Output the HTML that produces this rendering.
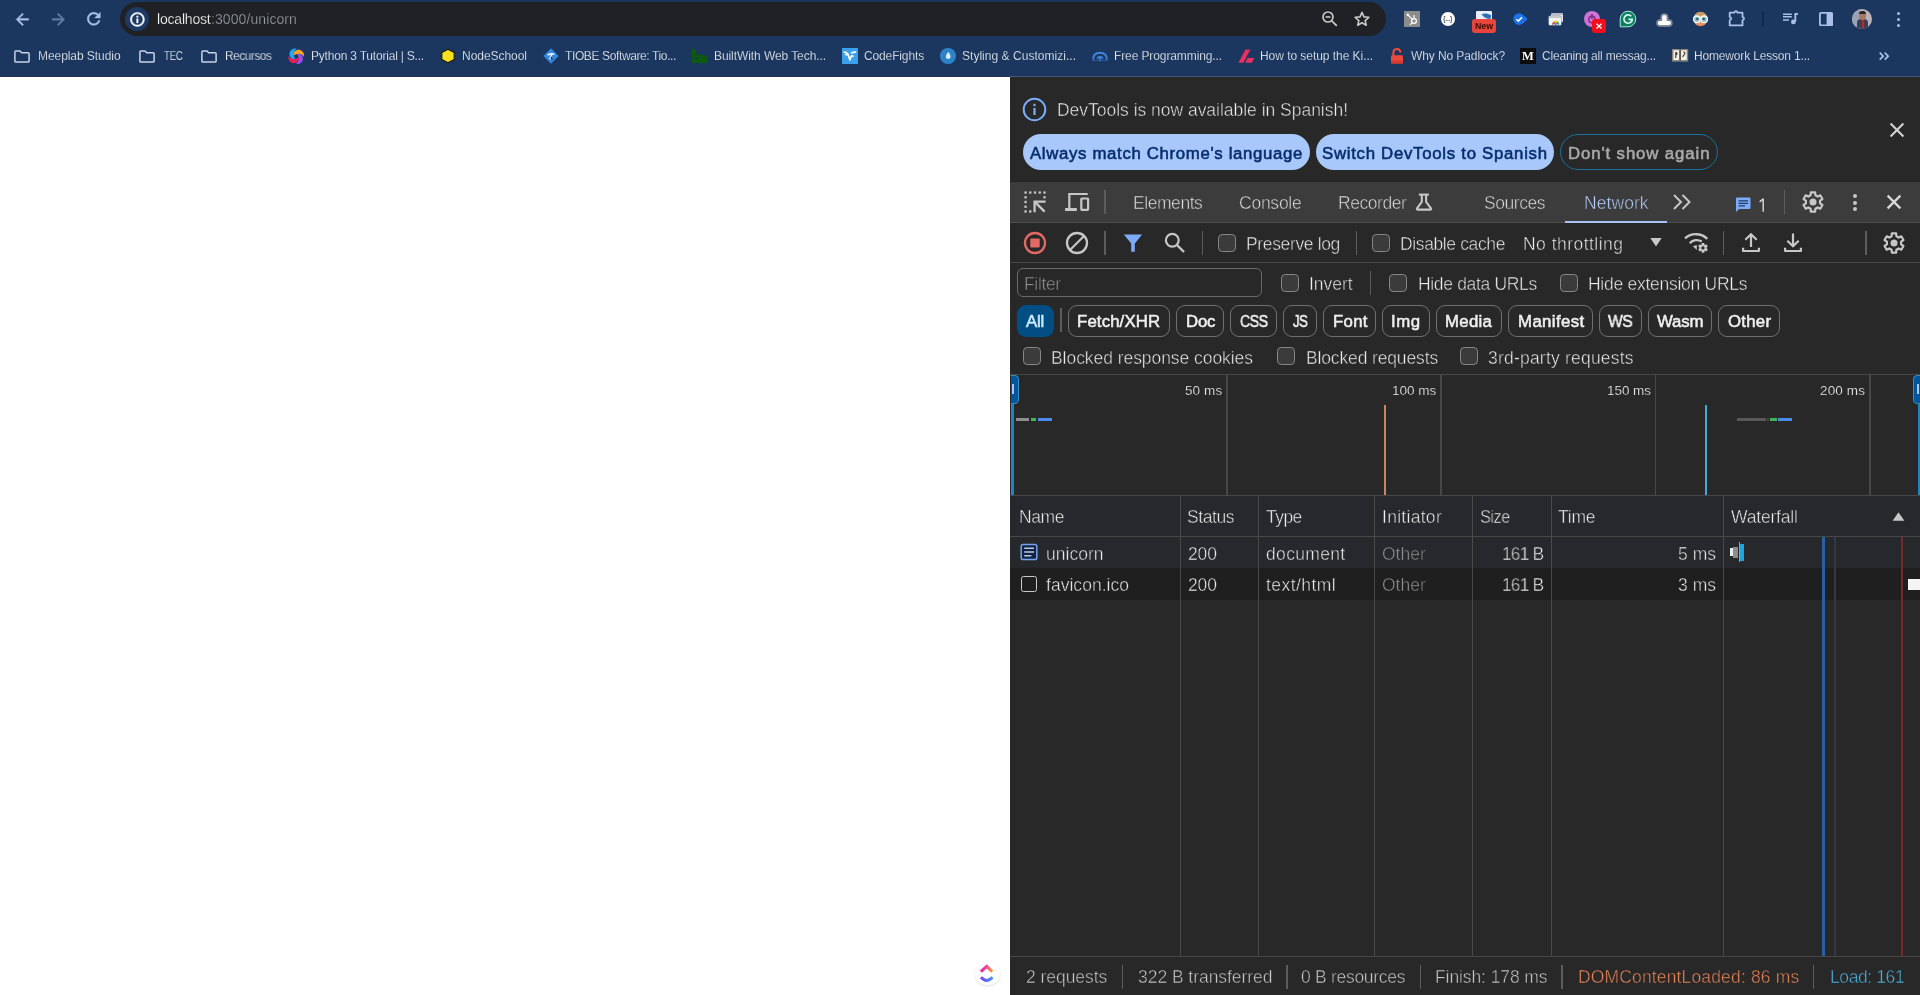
<!DOCTYPE html>
<html><head><meta charset="utf-8"><title>localhost:3000/unicorn</title>
<style>
html,body{margin:0;padding:0;}
body{width:1920px;height:995px;overflow:hidden;background:#fff;position:relative;font-family:"Liberation Sans",sans-serif;}
.r{position:absolute;display:block;box-sizing:border-box;}
.t{position:absolute;height:24px;line-height:24px;white-space:pre;font-family:"Liberation Sans",sans-serif;will-change:transform;}
</style></head><body>
<div class="r" style="left:0px;top:0px;width:1920px;height:77px;background:#1b375f;"></div>
<div class="r" style="left:0px;top:76px;width:1010px;height:1px;background:#21355a;"></div>
<div class="r" style="left:1010px;top:76px;width:910px;height:1px;background:#45587a;"></div>
<div class="r" style="left:120px;top:2px;width:1266px;height:34px;background:#202124;border-radius:17px;"></div>
<svg class="r" style="left:12.700000000000001px;top:9.799999999999999px;" width="18.8" height="18.8" viewBox="0 0 24 24"><path d="M20 11H7.830l5.590-5.590L12 4l-8 8 8 8 1.410-1.410L7.830 13H20v-2z" fill="#a9c1ea" stroke="#a9c1ea" stroke-width=".55" stroke-linejoin="round"/></svg>
<svg class="r" style="left:48.6px;top:9.799999999999999px;" width="18.8" height="18.8" viewBox="0 0 24 24"><path d="M12 4l-1.410 1.410L16.170 11H4v2h12.170l-5.580 5.590L12 20l8-8z" fill="#5f7ba6" stroke="#5f7ba6" stroke-width=".55" stroke-linejoin="round"/></svg>
<svg class="r" style="left:84.2px;top:9.2px;" width="19.6" height="19.6" viewBox="0 0 24 24"><path d="M17.650 6.350C16.200 4.900 14.210 4 12 4c-4.420 0-7.990 3.580-7.990 8s3.570 8 7.990 8c3.730 0 6.840-2.550 7.730-6h-2.080c-.820 2.330-3.040 4-5.650 4-3.310 0-6-2.690-6-6s2.690-6 6-6c1.660 0 3.140.690 4.220 1.780L13 11h7V4l-2.350 2.350z" fill="#a9c1ea" stroke="#a9c1ea" stroke-width=".5" stroke-linejoin="round"/></svg>
<div class="r" style="left:125px;top:7px;width:24px;height:24px;background:#1d3a65;border-radius:12px;"></div>
<svg class="r" style="left:128.6px;top:10.65px;" width="16.8" height="16.8" viewBox="0 0 24 24"><path d="M11 7h2v2h-2zm0 4h2v6h-2zm1-9C6.480 2 2 6.480 2 12s4.480 10 10 10 10-4.480 10-10S17.520 2 12 2zm0 18c-4.410 0-8-3.590-8-8s3.590-8 8-8 8 3.590 8 8-3.590 8-8 8z" fill="#ffffff" stroke="#ffffff" stroke-width=".7"/></svg>
<div class="t" style="left:157px;top:7.0px;font-size:14px;color:#ffffff;font-weight:400;letter-spacing:-0.195px;-webkit-text-stroke:0.25px #202124;">localhost</div>
<div class="t" style="left:211px;top:7.0px;font-size:14px;color:#9aa0a6;font-weight:400;letter-spacing:0.089px;-webkit-text-stroke:0.25px #202124;">:3000/unicorn</div>
<svg class="r" style="left:1320px;top:9px;" width="20" height="20" viewBox="0 0 20 20"><circle cx="8" cy="8" r="5" fill="none" stroke="#c4c7c5" stroke-width="1.7"/><path d="M11.8 11.8l5 5" stroke="#c4c7c5" stroke-width="1.9"/><rect x="5.6" y="7.2" width="4.8" height="1.6" fill="#c4c7c5"/></svg>
<svg class="r" style="left:1353px;top:10px;" width="18" height="18" viewBox="0 0 20 20"><path d="M10 2.6l2.2 5 5.4.5-4.1 3.6 1.2 5.3L10 14.2l-4.7 2.8 1.2-5.3-4.1-3.6 5.4-.5z" fill="none" stroke="#c4c7c5" stroke-width="1.8" stroke-linejoin="round"/></svg>
<div class="r" style="left:1404px;top:11px;width:16px;height:16px;background:#8c8c8c;"></div>
<svg class="r" style="left:1404px;top:11px;" width="16" height="16" viewBox="0 0 16 16"><circle cx="10" cy="10" r="2.4" fill="none" stroke="#fff" stroke-width="1.3"/><path d="M8.3 8.3L4 4M10 7.5V4M8 11.8l-2 2" stroke="#fff" stroke-width="1.2"/><circle cx="3.8" cy="3.8" r="1.2" fill="#fff"/></svg>
<div class="r" style="left:1440.8px;top:11.8px;width:14.6px;height:14.6px;background:#ffffff;border-radius:7.300px;"></div>
<div class="t" style="left:1443.4px;top:6.7px;font-size:6.5px;color:#555;font-weight:700;letter-spacing:-0.215px;">{...}</div>
<div class="r" style="left:1476px;top:11px;width:16px;height:9px;background:#e8eef8;border-radius:1px;"></div>
<svg class="r" style="left:1476px;top:11px;" width="16" height="9" viewBox="0 0 16 9"><path d="M5.500 3.200c3-1.300 6.500-.900 9.500 1 .300 1.400-.100 2.700-1 3.800-2.800 0-6-1.500-8.500-4.800z" fill="#2f6fb5"/></svg>
<div class="r" style="left:1472px;top:19px;width:24px;height:14px;background:#e8453c;border-radius:3px;"></div>
<div class="t" style="left:1475.2px;top:14.3px;font-size:8.8px;color:#3a0b08;font-weight:700;letter-spacing:-0.031px;">New</div>
<svg class="r" style="left:1512.6px;top:13.4px;" width="15" height="12.2" viewBox="0 0 15 12.2"><path d="M6.100.300a5.800 5.800 0 1 0 0 11.600c2.600 0 5.600-2.900 8.600-5.800C11.700 3.200 8.700.300 6.100.300z" fill="#1a73e8"/><path d="M3.400 6.200l1.900 1.900 3.700-3.900" fill="none" stroke="#fff" stroke-width="1.600"/></svg>
<div class="r" style="left:1551.2px;top:13.2px;width:11.5px;height:8.5px;background:#dfe2e6;border-radius:1px;border-top:2px solid #b9bec6;"></div>
<div class="r" style="left:1549px;top:16px;width:12px;height:9.3px;background:#f3f4f6;border-radius:1px;border-top:2px solid #c3c7ce;box-shadow:0 0 0 .6px #9aa0aa;"></div>
<svg class="r" style="left:1551.5px;top:19.3px;" width="7.4" height="6" viewBox="0 0 7.4 6"><path d="M.300 6a3.400 3.400 0 0 1 1.300-3.500L3.700 4.600z" fill="#e94235"/><path d="M1.600 2.500A3.400 3.400 0 0 1 5.800 2.500L3.700 4.600z" fill="#fbbc04"/><path d="M5.800 2.500A3.400 3.400 0 0 1 7.100 6L3.700 4.600z" fill="#34a853"/><circle cx="3.700" cy="4.900" r="1.200" fill="#4285f4"/></svg>
<div class="r" style="left:1584px;top:11px;width:16px;height:16px;background:#cf73d4;border-radius:8px;"></div>
<svg class="r" style="left:1586px;top:13px;" width="12" height="12" viewBox="0 0 12 12"><circle cx="6" cy="6.500" r="3.200" fill="none" stroke="#7a2b86" stroke-width="1.400"/><path d="M6 1v5" stroke="#7a2b86" stroke-width="1.400"/></svg>
<div class="r" style="left:1592px;top:19px;width:14px;height:14px;background:#f20d1a;border-radius:3px;"></div>
<svg class="r" style="left:1592px;top:19px;" width="14" height="14" viewBox="0 0 14 14"><path d="M4.500 4.800l5 4.600M9.500 4.800l-5 4.600" stroke="#fff" stroke-width="1.300"/></svg>
<svg class="r" style="left:1619px;top:10px;" width="18" height="18" viewBox="0 0 18 18"><path d="M9 1.200a7.800 7.800 0 1 1 0 15.600H1.200V9A7.800 7.800 0 0 1 9 1.200z" fill="#0d7f60" stroke="#a8e6d6" stroke-width="1"/><path d="M12.300 6.300a4.200 4.200 0 1 0 1 3.100H9.400" fill="none" stroke="#d4f4ec" stroke-width="1.700"/></svg>
<svg class="r" style="left:1655.6px;top:12.6px;overflow:visible;" width="17" height="14" viewBox="0 0 17 14"><rect x="4.40" y="0.30" width="8.00" height="13.50" rx="4.00" fill="#7f8797"/><circle cx="3.900" cy="10.050" r="3.75" fill="#7f8797"/><circle cx="12.900" cy="10.050" r="3.75" fill="#7f8797"/><rect x="3.900" y="6.30" width="9" height="7.50" fill="#7f8797"/><rect x="6.15" y="2.05" width="4.50" height="10.00" rx="2.25" fill="#fdfcfa"/><circle cx="3.900" cy="10.050" r="2.00" fill="#fdfcfa"/><circle cx="12.900" cy="10.050" r="2.00" fill="#fdfcfa"/><rect x="3.900" y="8.05" width="9" height="4.00" fill="#fdfcfa"/></svg>
<svg class="r" style="left:1691.5px;top:11.2px;" width="17" height="16" viewBox="0 0 17 16"><ellipse cx="8.500" cy="8" rx="6.800" ry="7.300" fill="#e58a5b"/><path d="M1.900 6.500A6.800 7.300 0 0 1 15.100 6.500L8.500 9z" fill="#c99a6b"/><circle cx="4.900" cy="8.300" r="3.300" fill="#8dbfc7" stroke="#f2f8f9" stroke-width="1.400"/><circle cx="12.100" cy="8.300" r="3.300" fill="#8dbfc7" stroke="#f2f8f9" stroke-width="1.400"/><circle cx="5.300" cy="7.900" r="1.200" fill="#35555e"/><circle cx="11.700" cy="7.900" r="1.200" fill="#35555e"/><path d="M7.300 12.200h2.400L8.500 14z" fill="#f3a070"/></svg>
<svg class="r" style="left:1727px;top:10px;" width="19" height="18" viewBox="0 0 19 18"><path d="M2.700 2.700H7.400a1.500 1.500 0 0 1 3 0H15.500V7.100a1.500 1.500 0 0 1 0 3V15.400H2.700V10.100a1.500 1.500 0 0 0 0-3z" fill="none" stroke="#a9c1ea" stroke-width="1.800" stroke-linejoin="round"/></svg>
<div class="r" style="left:1762px;top:11px;width:2px;height:16px;background:#10294f;border-radius:1px;"></div>
<svg class="r" style="left:1781px;top:10px;" width="18" height="18" viewBox="0 0 18 18"><path d="M2 4.200h8.800M2 6.800h8.800M2 10h6" stroke="#a9c1ea" stroke-width="1.500"/><path d="M14.300 3.100v8.600" stroke="#a9c1ea" stroke-width="1.800"/><path d="M14.300 4h2.700" stroke="#a9c1ea" stroke-width="1.800"/><circle cx="12.400" cy="11.900" r="2.400" fill="#a9c1ea"/></svg>
<svg class="r" style="left:1818.9px;top:12px;" width="14.2" height="14.4" viewBox="0 0 14.2 14.4"><rect x=".900" y=".900" width="12.400" height="12.600" rx="1.200" fill="none" stroke="#a9c1ea" stroke-width="1.800"/><rect x="7.600" y=".900" width="5.700" height="12.600" fill="#a9c1ea"/></svg>
<div class="r" style="left:1852px;top:9px;width:20px;height:20px;border-radius:10px;overflow:hidden;background:#b9b4b8;"><div class="r" style="left:0;top:0;width:8px;height:20px;background:#9aa3b5;"></div><div class="r" style="left:5px;top:10px;width:11px;height:12px;background:#3c3f52;border-radius:4px 4px 0 0;"></div><div class="r" style="left:7px;top:3px;width:7px;height:8px;background:#a87862;border-radius:3.500px;"></div><div class="r" style="left:7px;top:2px;width:7px;height:3px;background:#2b2422;border-radius:3px 3px 0 0;"></div><div class="r" style="left:9.500px;top:11px;width:2px;height:8px;background:#c0272d;"></div></div>
<div class="r" style="left:1896.5px;top:11.5px;width:3px;height:3px;background:#a9c1ea;border-radius:1.5px;"></div>
<div class="r" style="left:1896.5px;top:17.5px;width:3px;height:3px;background:#a9c1ea;border-radius:1.5px;"></div>
<div class="r" style="left:1896.5px;top:23.5px;width:3px;height:3px;background:#a9c1ea;border-radius:1.5px;"></div>
<svg class="r" style="left:14px;top:50px;" width="16" height="13" viewBox="0 0 16 13"><path d="M1.800 1h4.200l1.600 1.700h6.600a.900.900 0 0 1 .900.900v7.600a.900.900 0 0 1-.900.900H1.800a.900.900 0 0 1-.900-.900V1.900a.900.900 0 0 1 .900-.900z" fill="none" stroke="#c7d3e8" stroke-width="1.500"/></svg>
<div class="t" style="left:38px;top:44.0px;font-size:12px;color:#ffffff;font-weight:400;letter-spacing:-0.064px;-webkit-text-stroke:0.25px #1b375f;">Meeplab Studio</div>
<svg class="r" style="left:139px;top:50px;" width="16" height="13" viewBox="0 0 16 13"><path d="M1.800 1h4.200l1.600 1.700h6.600a.900.900 0 0 1 .900.900v7.600a.900.900 0 0 1-.900.900H1.800a.900.900 0 0 1-.900-.900V1.900a.900.900 0 0 1 .900-.900z" fill="none" stroke="#c7d3e8" stroke-width="1.500"/></svg>
<div class="t" style="left:164px;top:44.0px;font-size:12px;color:#ffffff;font-weight:400;letter-spacing:-0.420px;-webkit-text-stroke:0.25px #1b375f;transform:scaleX(0.8135);transform-origin:0 50%;">TEC</div>
<svg class="r" style="left:201px;top:50px;" width="16" height="13" viewBox="0 0 16 13"><path d="M1.800 1h4.200l1.600 1.700h6.600a.900.900 0 0 1 .900.900v7.600a.900.900 0 0 1-.900.900H1.800a.900.900 0 0 1-.900-.900V1.900a.900.900 0 0 1 .900-.900z" fill="none" stroke="#c7d3e8" stroke-width="1.500"/></svg>
<div class="t" style="left:225px;top:44.0px;font-size:12px;color:#ffffff;font-weight:400;letter-spacing:-0.420px;-webkit-text-stroke:0.25px #1b375f;transform:scaleX(0.9826);transform-origin:0 50%;">Recursos</div>
<svg class="r" style="left:287.8px;top:47.6px;" width="16.4" height="16.8" viewBox="-0.3 -0.3 16.6 16.6"><path d="M5.400 7C4.600 3.600 7.600.300 12 1.400c3 .900 4.500 3.900 3.800 7C14.300 5.600 10.500 4.600 5.400 7z" fill="#f5a524" transform="rotate(0 8 8)"/><path d="M5.400 7C4.600 3.600 7.600.300 12 1.400c3 .900 4.500 3.900 3.800 7C14.300 5.600 10.500 4.600 5.400 7z" fill="#8f52ea" transform="rotate(90 8 8)"/><path d="M5.400 7C4.600 3.600 7.600.300 12 1.400c3 .900 4.500 3.900 3.800 7C14.300 5.600 10.500 4.600 5.400 7z" fill="#ec1c5b" transform="rotate(180 8 8)"/><path d="M5.400 7C4.600 3.600 7.600.300 12 1.400c3 .900 4.500 3.900 3.800 7C14.300 5.600 10.500 4.600 5.400 7z" fill="#1ea7f2" transform="rotate(270 8 8)"/></svg>
<div class="t" style="left:310.5px;top:44.0px;font-size:12px;color:#ffffff;font-weight:400;letter-spacing:-0.202px;-webkit-text-stroke:0.25px #1b375f;">Python 3 Tutorial | S...</div>
<svg class="r" style="left:440px;top:48px;" width="16" height="16" viewBox="0 0 16 16"><path d="M8 1.200l6.200 3.400v6.800L8 14.800 1.800 11.400v-6.800z" fill="#f7df1e" stroke="#15150c" stroke-width="1.100" stroke-linejoin="round"/></svg>
<div class="t" style="left:462px;top:44.0px;font-size:12px;color:#ffffff;font-weight:400;letter-spacing:-0.038px;-webkit-text-stroke:0.25px #1b375f;">NodeSchool</div>
<svg class="r" style="left:543px;top:48px;" width="16" height="16" viewBox="0 0 16 16"><path d="M8 .300l7.600 7.700L8 15.700.400 8z" fill="#3287de"/><path d="M4.700 7.200c1.600-1.700 3.600-1.700 6.600-.900" fill="none" stroke="#fff" stroke-width="1.500"/><path d="M8.600 6.500L6.600 11.200" stroke="#fff" stroke-width="1.500"/><path d="M7.700 8.800l1.700 2.700" stroke="#14233f" stroke-width="1.200"/></svg>
<div class="t" style="left:565px;top:44.0px;font-size:12px;color:#ffffff;font-weight:400;letter-spacing:-0.381px;-webkit-text-stroke:0.25px #1b375f;">TIOBE Software: Tio...</div>
<svg class="r" style="left:691.6px;top:48.5px;" width="16" height="14" viewBox="0 0 16 14"><path d="M0 0h3.800v5.200h4.700v3.300l2.400-3.300 2 3 2.400-3.300.700 9.100H0z" fill="#0b5a0e"/><rect x="3.600" y="8" width="2.200" height="2.600" fill="#1b375f"/></svg>
<div class="t" style="left:714px;top:44.0px;font-size:12px;color:#ffffff;font-weight:400;letter-spacing:-0.076px;-webkit-text-stroke:0.25px #1b375f;">BuiltWith Web Tech...</div>
<div class="r" style="left:842.2px;top:48px;width:15.8px;height:16px;background:#3ba1ea;"></div>
<svg class="r" style="left:842.2px;top:48px;" width="15.8" height="16" viewBox="0 0 15.8 16"><path d="M1.600 4.200c2.200-.200 3.600.500 4.500 2.300l1.800 5.400 1.300-3.700h2.500M9 5.400c1.300-1 3-1.300 5.200-1.200" fill="none" stroke="#fff" stroke-width="1.700" stroke-linejoin="round"/><path d="M2.800 6.400c1.200 0 2 .400 2.500 1.200" fill="none" stroke="#fff" stroke-width="1.100"/></svg>
<div class="t" style="left:864px;top:44.0px;font-size:12px;color:#ffffff;font-weight:400;letter-spacing:-0.137px;-webkit-text-stroke:0.25px #1b375f;">CodeFights</div>
<div class="r" style="left:940.3px;top:48.3px;width:15.4px;height:15.4px;background:#2b82c6;border-radius:7.700px;"></div>
<svg class="r" style="left:940px;top:48px;" width="16" height="16" viewBox="0 0 16 16"><path d="M8.300 3.800c1.500 2.200 2.300 3.600 2.300 4.900a2.400 2.400 0 1 1-4.800 0c0-1.300 1-2.700 2.500-4.900z" fill="#dcecf9"/></svg>
<div class="t" style="left:962px;top:44.0px;font-size:12px;color:#ffffff;font-weight:400;letter-spacing:0.029px;-webkit-text-stroke:0.25px #1b375f;">Styling &amp; Customizi...</div>
<svg class="r" style="left:1091px;top:48px;" width="18" height="16" viewBox="0 0 18 16"><path d="M2.100 11.800C2.100 6.800 5.200 4.800 9 4.800s6.900 2 6.900 7" fill="none" stroke="#3f86da" stroke-width="1.900"/><path d="M6.200 10.800a2.900 2.600 0 0 1 5.600 0" fill="none" stroke="#3f86da" stroke-width="1.600"/><path d="M9 8.500v4.800" stroke="#3f86da" stroke-width="1.700"/><path d="M1.200 12.300h15.600" stroke="#2a5fa8" stroke-width="1"/></svg>
<div class="t" style="left:1114px;top:44.0px;font-size:12px;color:#ffffff;font-weight:400;letter-spacing:-0.107px;-webkit-text-stroke:0.25px #1b375f;">Free Programming...</div>
<svg class="r" style="left:1237px;top:48px;" width="18" height="16" viewBox="0 0 18 16"><path d="M8.400 1.500h4.900L6.400 14.800H1.500z" fill="#eb2f62"/><path d="M10.600 10h6.600l-2.300 4.800H8.200z" fill="#eb2f62"/></svg>
<div class="t" style="left:1260px;top:44.0px;font-size:12px;color:#ffffff;font-weight:400;letter-spacing:-0.048px;-webkit-text-stroke:0.25px #1b375f;">How to setup the Ki...</div>
<svg class="r" style="left:1389px;top:47px;" width="16" height="18" viewBox="0 0 16 18"><rect x="2" y="8.200" width="12" height="8.400" rx="1.200" fill="#e94a3c"/><path d="M4.400 8.200V5.600a3.500 3.500 0 0 1 6.900-.900" fill="none" stroke="#e94a3c" stroke-width="2.100" stroke-linecap="round"/><path d="M2 13.500h12v1.900a1.200 1.200 0 0 1-1.200 1.200H3.200A1.200 1.200 0 0 1 2 15.400z" fill="#d8392c"/></svg>
<div class="t" style="left:1411px;top:44.0px;font-size:12px;color:#ffffff;font-weight:400;letter-spacing:-0.092px;-webkit-text-stroke:0.25px #1b375f;">Why No Padlock?</div>
<div class="r" style="left:1520.2px;top:48.4px;width:15.8px;height:15.6px;background:#0c0c0c;"></div>
<div class="t" style="left:1522.300px;top:44.300px;font-size:12.500px;color:#fff;font-weight:700;font-family:'Liberation Serif',serif;letter-spacing:-.3px;">M</div>
<div class="t" style="left:1542px;top:44.0px;font-size:12px;color:#ffffff;font-weight:400;letter-spacing:-0.185px;-webkit-text-stroke:0.25px #1b375f;">Cleaning all messag...</div>
<svg class="r" style="left:1672.4px;top:49px;" width="16.2" height="12.6" viewBox="0 0 16.2 12.6"><rect x="0" y="0" width="16.200" height="12.600" fill="#8d8780"/><path d="M1.500 1.200h5.600v9.800H1.500zM9.100 1.200h5.600v9.800H9.100z" fill="#f5f2ea"/><path d="M3.800 3v6M5.300 3.500c-1 .8-1 1.800 0 2.400M11.300 3c1.500 0 2 1 1.300 2.300-.600 1-1.600 1.300-1.900 2.900" fill="none" stroke="#3a322b" stroke-width="1.100"/><rect x="7.500" y=".600" width="1.200" height="11" fill="#4c453e"/></svg>
<div class="t" style="left:1694px;top:44.0px;font-size:12px;color:#ffffff;font-weight:400;letter-spacing:-0.169px;-webkit-text-stroke:0.25px #1b375f;">Homework Lesson 1...</div>
<svg class="r" style="left:1878px;top:51px;" width="12" height="10" viewBox="0 0 12 10"><path d="M1.700 1.700l3.500 3.500-3.500 3.500M6.700 1.700l3.500 3.500-3.500 3.500" fill="none" stroke="#a9c1ea" stroke-width="1.700"/></svg>
<div class="r" style="left:1010px;top:77px;width:910px;height:918px;background:#282828;"></div>
<svg class="r" style="left:1022px;top:97px;" width="25" height="25" viewBox="0 0 25 25"><circle cx="12.5" cy="12.5" r="10.8" fill="none" stroke="#7cacf8" stroke-width="2"/><rect x="11.4" y="11" width="2.2" height="7" fill="#7cacf8"/><rect x="11.4" y="6.8" width="2.2" height="2.4" fill="#7cacf8"/></svg>
<div class="t" style="left:1057px;top:98.2px;font-size:17.5px;color:#eeeeee;font-weight:400;letter-spacing:-0.023px;-webkit-text-stroke:0.46px #282828;">DevTools is now available in Spanish!</div>
<div class="r" style="left:1023px;top:134px;width:287px;height:36px;background:#a8c7fa;border-radius:18px;"></div>
<div class="t" style="left:1029.7px;top:142.3px;font-size:16.8px;color:#062e6f;font-weight:400;letter-spacing:0.661px;-webkit-text-stroke:.55px currentColor;">Always match Chrome&#x27;s language</div>
<div class="r" style="left:1316px;top:134px;width:238px;height:36px;background:#a8c7fa;border-radius:18px;"></div>
<div class="t" style="left:1322px;top:142.3px;font-size:16.8px;color:#062e6f;font-weight:400;letter-spacing:0.719px;-webkit-text-stroke:.55px currentColor;">Switch DevTools to Spanish</div>
<div class="r" style="left:1560px;top:134px;width:158px;height:36px;background:transparent;border-radius:18px;border:1.4px solid #17729f;"></div>
<div class="t" style="left:1568px;top:142.3px;font-size:16.8px;color:#a9a9a9;font-weight:400;letter-spacing:0.884px;-webkit-text-stroke:.55px currentColor;">Don&#x27;t show again</div>
<svg class="r" style="left:1888px;top:121.1px;" width="18" height="18" viewBox="0 0 18 18"><path d="M2.600 2.600l12.800 12.800M15.400 2.600L2.600 15.400" stroke="#d2d2d2" stroke-width="2.100"/></svg>
<div class="r" style="left:1010px;top:181px;width:910px;height:1px;background:#232323;"></div>
<div class="r" style="left:1010px;top:182px;width:910px;height:40px;background:#3c3c3c;"></div>
<div class="r" style="left:1010px;top:222px;width:910px;height:1px;background:#4e4c4c;"></div>
<svg class="r" style="left:1023px;top:190px;" width="24" height="24" viewBox="0 0 24 24"><rect x="1.40" y="1.40" width="2.3" height="2.3" fill="#c7c7c7"/><rect x="6.13" y="1.40" width="2.3" height="2.3" fill="#c7c7c7"/><rect x="10.86" y="1.40" width="2.3" height="2.3" fill="#c7c7c7"/><rect x="15.59" y="1.40" width="2.3" height="2.3" fill="#c7c7c7"/><rect x="20.32" y="1.40" width="2.3" height="2.3" fill="#c7c7c7"/><rect x="1.40" y="6.13" width="2.3" height="2.3" fill="#c7c7c7"/><rect x="1.40" y="10.86" width="2.3" height="2.3" fill="#c7c7c7"/><rect x="1.40" y="15.59" width="2.3" height="2.3" fill="#c7c7c7"/><rect x="1.40" y="20.32" width="2.3" height="2.3" fill="#c7c7c7"/><rect x="20.32" y="6.13" width="2.3" height="2.3" fill="#c7c7c7"/><rect x="6.13" y="20.32" width="2.3" height="2.3" fill="#c7c7c7"/><path d="M11.600 22.200V11.600H22.600" fill="none" stroke="#c7c7c7" stroke-width="2.300"/><path d="M11.800 11.800L21.600 21.600" stroke="#c7c7c7" stroke-width="2.400"/></svg>
<svg class="r" style="left:1064px;top:191px;" width="26" height="22" viewBox="0 0 26 22"><path d="M5.300 17V3h18.400" fill="none" stroke="#c7c7c7" stroke-width="2.200"/><rect x="1.100" y="17" width="11.700" height="3" fill="#c7c7c7"/><rect x="17.300" y="7.500" width="6.800" height="11.400" rx=".600" fill="none" stroke="#c7c7c7" stroke-width="2.200"/></svg>
<div class="r" style="left:1104.35px;top:190px;width:1.3px;height:24px;background:#5c5c5c;"></div>
<div class="t" style="left:1133.3px;top:190.6px;font-size:17.5px;color:#dcdcdc;font-weight:400;letter-spacing:-0.444px;-webkit-text-stroke:0.46px #3c3c3c;">Elements</div>
<div class="t" style="left:1238.8px;top:190.6px;font-size:17.5px;color:#dcdcdc;font-weight:400;letter-spacing:-0.244px;-webkit-text-stroke:0.46px #3c3c3c;">Console</div>
<div class="t" style="left:1338.3px;top:190.6px;font-size:17.5px;color:#dcdcdc;font-weight:400;letter-spacing:-0.447px;-webkit-text-stroke:0.46px #3c3c3c;">Recorder</div>
<svg class="r" style="left:1415px;top:192px;" width="19" height="20" viewBox="0 0 19 20"><path d="M3.900 2.600H13.900" stroke="#c7c7c7" stroke-width="2.100"/><path d="M6.800 2.600V9.800L2 16.400a.800.800 0 0 0 .700 1.200h12.600a.800.800 0 0 0 .700-1.200L11.100 9.800V2.600" fill="none" stroke="#c7c7c7" stroke-width="2.100" stroke-linejoin="round"/></svg>
<div class="t" style="left:1484.2px;top:190.6px;font-size:17.5px;color:#dcdcdc;font-weight:400;letter-spacing:-0.443px;-webkit-text-stroke:0.46px #3c3c3c;">Sources</div>
<div class="t" style="left:1583.5px;top:190.6px;font-size:17.5px;color:#b6cffa;font-weight:400;letter-spacing:0.074px;-webkit-text-stroke:0.46px #3c3c3c;">Network</div>
<div class="r" style="left:1565px;top:220.7px;width:102px;height:2.3px;background:#a6c3f4;"></div>
<svg class="r" style="left:1672px;top:193px;" width="20" height="18" viewBox="0 0 20 18"><path d="M2 2l7 7-7 7M10.500 2l7 7-7 7" fill="none" stroke="#c7c7c7" stroke-width="2"/></svg>
<svg class="r" style="left:1735.4px;top:197.3px;" width="17" height="16" viewBox="0 0 17 16"><path d="M1 1.500a1 1 0 0 1 1-1h12.500a1 1 0 0 1 1 1v9.500a1 1 0 0 1-1 1H4l-3 3z" fill="#7cacf8"/><path d="M3.500 3.800h9.500M3.500 6.300h9.500M3.500 8.800h6.500" stroke="#1f3a64" stroke-width="1.300"/></svg>
<svg class="r" style="left:1759.4px;top:198.4px;" width="6" height="14.2" viewBox="0 0 6 14.2"><path d="M.300 3.200L3.500.500H4.900V13.800H3.500V2.400L1 4.400z" fill="#dcdcdc"/></svg>
<div class="r" style="left:1784.05px;top:190px;width:1.3px;height:24px;background:#5c5c5c;"></div>
<svg class="r" style="left:1801px;top:190px;" width="24" height="24" viewBox="0 0 24 24"><path d="M9.60 5.21L9.84 2.34L14.16 2.34L14.40 5.21L16.68 6.53L19.29 5.30L21.45 9.04L19.08 10.69L19.08 13.31L21.45 14.96L19.29 18.70L16.68 17.47L14.40 18.79L14.16 21.66L9.84 21.66L9.60 18.79L7.32 17.47L4.71 18.70L2.55 14.96L4.92 13.31L4.92 10.69L2.55 9.04L4.71 5.30L7.32 6.53Z" fill="none" stroke="#c7c7c7" stroke-width="2.2" stroke-linejoin="round"/><circle cx="12" cy="12" r="3.5" fill="#c7c7c7"/></svg>
<div class="r" style="left:1853px;top:194.3px;width:4px;height:4px;background:#c7c7c7;border-radius:2px;"></div>
<div class="r" style="left:1853px;top:200.6px;width:4px;height:4px;background:#c7c7c7;border-radius:2px;"></div>
<div class="r" style="left:1853px;top:207px;width:4px;height:4px;background:#c7c7c7;border-radius:2px;"></div>
<svg class="r" style="left:1885px;top:193px;" width="18" height="18" viewBox="0 0 18 18"><path d="M2.600 2.600l12.800 12.800M15.400 2.600L2.600 15.400" stroke="#d8d8d8" stroke-width="2.300"/></svg>
<div class="r" style="left:1010px;top:262px;width:910px;height:1px;background:#474747;"></div>
<svg class="r" style="left:1023px;top:231px;" width="24" height="24" viewBox="0 0 24 24"><circle cx="12" cy="12" r="10" fill="none" stroke="#e46962" stroke-width="2.300"/><rect x="7.300" y="7.500" width="9.400" height="9" rx="1" fill="#e46962"/></svg>
<svg class="r" style="left:1065px;top:231px;" width="24" height="24" viewBox="0 0 24 24"><circle cx="12" cy="12" r="10" fill="none" stroke="#c7c7c7" stroke-width="2.300"/><path d="M5 19L19 5" stroke="#c7c7c7" stroke-width="2.200"/></svg>
<div class="r" style="left:1104.35px;top:231px;width:1.3px;height:24px;background:#5c5c5c;"></div>
<svg class="r" style="left:1122px;top:233px;" width="22" height="20" viewBox="0 0 22 20"><path d="M1.800 1.500h18.400L12.800 10.500V18.800H9.200V10.500z" fill="#7cacf8"/></svg>
<svg class="r" style="left:1163px;top:231px;" width="24" height="24" viewBox="0 0 24 24"><circle cx="9.300" cy="9.300" r="6.400" fill="none" stroke="#c7c7c7" stroke-width="2.200"/><path d="M14 14l7 7" stroke="#c7c7c7" stroke-width="2.400"/></svg>
<div class="r" style="left:1201.85px;top:231px;width:1.3px;height:24px;background:#5c5c5c;"></div>
<div class="r" style="left:1218px;top:233.95px;width:18.1px;height:18.1px;background:#3b3b3b;border:1.6px solid #878787;border-radius:4.2px;"></div>
<div class="t" style="left:1246.3px;top:231.6px;font-size:17.5px;color:#eeeeee;font-weight:400;letter-spacing:-0.354px;-webkit-text-stroke:0.46px #282828;">Preserve log</div>
<div class="r" style="left:1355.85px;top:231px;width:1.3px;height:24px;background:#5c5c5c;"></div>
<div class="r" style="left:1372px;top:233.95px;width:18.1px;height:18.1px;background:#3b3b3b;border:1.6px solid #878787;border-radius:4.2px;"></div>
<div class="t" style="left:1400.3px;top:231.6px;font-size:17.5px;color:#eeeeee;font-weight:400;letter-spacing:-0.379px;-webkit-text-stroke:0.46px #282828;">Disable cache</div>
<div class="t" style="left:1523.3px;top:231.6px;font-size:17.5px;color:#eeeeee;font-weight:400;letter-spacing:0.465px;-webkit-text-stroke:0.46px #282828;">No throttling</div>
<svg class="r" style="left:1650px;top:238px;" width="12" height="9" viewBox="0 0 12 9"><path d="M0.300 0h11.400L6 8.500z" fill="#c7c7c7"/></svg>
<svg class="r" style="left:1684px;top:232px;" width="26" height="22" viewBox="0 0 26 22"><path d="M1 6.400A16.400 16.400 0 0 1 23.300 6.800" fill="none" stroke="#c7c7c7" stroke-width="2.300"/><path d="M5.700 11.200A9.500 9.500 0 0 1 17.800 9.500" fill="none" stroke="#c7c7c7" stroke-width="2.200"/><path d="M8.900 14.200L12.800 13.100V18z" fill="#c7c7c7"/><path d="M17.53 12.61L17.71 11.07L20.29 11.07L20.47 12.61L21.11 12.99L22.54 12.37L23.83 14.60L22.58 15.53L22.58 16.27L23.83 17.20L22.54 19.43L21.11 18.81L20.47 19.19L20.29 20.73L17.71 20.73L17.53 19.19L16.89 18.81L15.46 19.43L14.17 17.20L15.42 16.27L15.42 15.53L14.17 14.60L15.46 12.37L16.89 12.99ZM20.600 15.900a1.600 1.600 0 1 0-3.200 0a1.600 1.600 0 1 0 3.200 0z" fill="#c7c7c7" fill-rule="evenodd"/></svg>
<div class="r" style="left:1722.6499999999999px;top:231px;width:1.3px;height:24px;background:#5c5c5c;"></div>
<svg class="r" style="left:1740px;top:232px;" width="22" height="22" viewBox="0 0 22 22"><path d="M11 15V2.500M5.300 7.800L11 2.200l5.700 5.600" fill="none" stroke="#c7c7c7" stroke-width="2.200"/><path d="M3.100 15.800v3.200h15.800v-3.200" fill="none" stroke="#c7c7c7" stroke-width="2.200" stroke-linejoin="round"/></svg>
<svg class="r" style="left:1782px;top:232px;" width="22" height="22" viewBox="0 0 22 22"><path d="M11 1.500v12.500M5.300 8.700L11 14.300l5.700-5.600" fill="none" stroke="#c7c7c7" stroke-width="2.200"/><path d="M3.100 15.800v3.200h15.800v-3.200" fill="none" stroke="#c7c7c7" stroke-width="2.200" stroke-linejoin="round"/></svg>
<div class="r" style="left:1865.35px;top:231px;width:1.3px;height:24px;background:#5c5c5c;"></div>
<svg class="r" style="left:1882px;top:231px;" width="24" height="24" viewBox="0 0 24 24"><path d="M9.60 5.21L9.84 2.34L14.16 2.34L14.40 5.21L16.68 6.53L19.29 5.30L21.45 9.04L19.08 10.69L19.08 13.31L21.45 14.96L19.29 18.70L16.68 17.47L14.40 18.79L14.16 21.66L9.84 21.66L9.60 18.79L7.32 17.47L4.71 18.70L2.55 14.96L4.92 13.31L4.92 10.69L2.55 9.04L4.71 5.30L7.32 6.53Z" fill="none" stroke="#c7c7c7" stroke-width="2.2" stroke-linejoin="round"/><circle cx="12" cy="12" r="3.5" fill="#c7c7c7"/></svg>
<div class="r" style="left:1017px;top:268px;width:245px;height:29px;background:transparent;border:1.2px solid #6a6a6a;border-radius:6px;"></div>
<div class="t" style="left:1024.2px;top:271.7px;font-size:17.5px;color:#8f8f8f;font-weight:400;letter-spacing:-0.348px;-webkit-text-stroke:0.46px #282828;">Filter</div>
<div class="r" style="left:1281px;top:274.05px;width:18.1px;height:18.1px;background:#3b3b3b;border:1.6px solid #878787;border-radius:4.2px;"></div>
<div class="t" style="left:1308.5px;top:271.7px;font-size:17.5px;color:#eeeeee;font-weight:400;letter-spacing:-0.045px;-webkit-text-stroke:0.46px #282828;">Invert</div>
<div class="r" style="left:1369.85px;top:271px;width:1.3px;height:24px;background:#5c5c5c;"></div>
<div class="r" style="left:1389px;top:274.05px;width:18.1px;height:18.1px;background:#3b3b3b;border:1.6px solid #878787;border-radius:4.2px;"></div>
<div class="t" style="left:1417.5px;top:271.7px;font-size:17.5px;color:#eeeeee;font-weight:400;letter-spacing:-0.338px;-webkit-text-stroke:0.46px #282828;">Hide data URLs</div>
<div class="r" style="left:1560px;top:274.05px;width:18.1px;height:18.1px;background:#3b3b3b;border:1.6px solid #878787;border-radius:4.2px;"></div>
<div class="t" style="left:1588.3px;top:271.7px;font-size:17.5px;color:#eeeeee;font-weight:400;letter-spacing:-0.273px;-webkit-text-stroke:0.46px #282828;">Hide extension URLs</div>
<div class="r" style="left:1017.2px;top:305.2px;width:37px;height:32px;background:#004e84;border-radius:9px;"></div>
<div class="t" style="left:1026.2px;top:310.0px;font-size:16.8px;color:#cdeaff;font-weight:400;letter-spacing:-0.224px;-webkit-text-stroke:.55px currentColor;">All</div>
<div class="r" style="left:1060.0500000000002px;top:308.3px;width:1.7px;height:23.5px;background:#5c5c5c;"></div>
<div class="r" style="left:1068.3px;top:305.1px;width:101.40000000000009px;height:32.1px;background:transparent;border:1.3px solid #707070;border-radius:9px;"></div>
<div class="t" style="left:1077.2px;top:310.0px;font-size:16.8px;color:#efefef;font-weight:400;letter-spacing:0.127px;-webkit-text-stroke:.55px currentColor;">Fetch/XHR</div>
<div class="r" style="left:1176.3px;top:305.1px;width:47.5px;height:32.1px;background:transparent;border:1.3px solid #707070;border-radius:9px;"></div>
<div class="t" style="left:1185.5px;top:310.0px;font-size:16.8px;color:#efefef;font-weight:400;letter-spacing:-0.225px;-webkit-text-stroke:.55px currentColor;">Doc</div>
<div class="r" style="left:1230.2px;top:305.1px;width:46.5px;height:32.1px;background:transparent;border:1.3px solid #707070;border-radius:9px;"></div>
<div class="t" style="left:1239.7px;top:310.0px;font-size:16.8px;color:#efefef;font-weight:400;letter-spacing:-0.588px;transform:scaleX(0.8389);transform-origin:0 50%;-webkit-text-stroke:.55px currentColor;">CSS</div>
<div class="r" style="left:1283px;top:305.1px;width:33.700000000000045px;height:32.1px;background:transparent;border:1.3px solid #707070;border-radius:9px;"></div>
<div class="t" style="left:1292.7px;top:310.0px;font-size:16.8px;color:#efefef;font-weight:400;letter-spacing:-0.588px;transform:scaleX(0.7868);transform-origin:0 50%;-webkit-text-stroke:.55px currentColor;">JS</div>
<div class="r" style="left:1323px;top:305.1px;width:52.799999999999955px;height:32.1px;background:transparent;border:1.3px solid #707070;border-radius:9px;"></div>
<div class="t" style="left:1332.5px;top:310.0px;font-size:16.8px;color:#efefef;font-weight:400;letter-spacing:0.271px;-webkit-text-stroke:.55px currentColor;">Font</div>
<div class="r" style="left:1382.2px;top:305.1px;width:47.799999999999955px;height:32.1px;background:transparent;border:1.3px solid #707070;border-radius:9px;"></div>
<div class="t" style="left:1391.3px;top:310.0px;font-size:16.8px;color:#efefef;font-weight:400;letter-spacing:0.498px;-webkit-text-stroke:.55px currentColor;">Img</div>
<div class="r" style="left:1436.2px;top:305.1px;width:65.5px;height:32.1px;background:transparent;border:1.3px solid #707070;border-radius:9px;"></div>
<div class="t" style="left:1445.3px;top:310.0px;font-size:16.8px;color:#efefef;font-weight:400;letter-spacing:0.288px;-webkit-text-stroke:.55px currentColor;">Media</div>
<div class="r" style="left:1508px;top:305.1px;width:84.79999999999995px;height:32.1px;background:transparent;border:1.3px solid #707070;border-radius:9px;"></div>
<div class="t" style="left:1517.5px;top:310.0px;font-size:16.8px;color:#efefef;font-weight:400;letter-spacing:0.401px;-webkit-text-stroke:.55px currentColor;">Manifest</div>
<div class="r" style="left:1599.2px;top:305.1px;width:42.5px;height:32.1px;background:transparent;border:1.3px solid #707070;border-radius:9px;"></div>
<div class="t" style="left:1608.3px;top:310.0px;font-size:16.8px;color:#efefef;font-weight:400;letter-spacing:-0.588px;transform:scaleX(0.9349);transform-origin:0 50%;-webkit-text-stroke:.55px currentColor;">WS</div>
<div class="r" style="left:1648px;top:305.1px;width:63.700000000000045px;height:32.1px;background:transparent;border:1.3px solid #707070;border-radius:9px;"></div>
<div class="t" style="left:1657.2px;top:310.0px;font-size:16.8px;color:#efefef;font-weight:400;letter-spacing:-0.118px;-webkit-text-stroke:.55px currentColor;">Wasm</div>
<div class="r" style="left:1718px;top:305.1px;width:62px;height:32.1px;background:transparent;border:1.3px solid #707070;border-radius:9px;"></div>
<div class="t" style="left:1727.5px;top:310.0px;font-size:16.8px;color:#efefef;font-weight:400;letter-spacing:0.257px;-webkit-text-stroke:.55px currentColor;">Other</div>
<div class="r" style="left:1023px;top:346.95px;width:18.1px;height:18.1px;background:#3b3b3b;border:1.6px solid #878787;border-radius:4.2px;"></div>
<div class="t" style="left:1051.3px;top:345.5px;font-size:17.5px;color:#eeeeee;font-weight:400;letter-spacing:-0.055px;-webkit-text-stroke:0.46px #282828;">Blocked response cookies</div>
<div class="r" style="left:1277px;top:346.95px;width:18.1px;height:18.1px;background:#3b3b3b;border:1.6px solid #878787;border-radius:4.2px;"></div>
<div class="t" style="left:1305.5px;top:345.5px;font-size:17.5px;color:#eeeeee;font-weight:400;letter-spacing:-0.140px;-webkit-text-stroke:0.46px #282828;">Blocked requests</div>
<div class="r" style="left:1460px;top:346.95px;width:18.1px;height:18.1px;background:#3b3b3b;border:1.6px solid #878787;border-radius:4.2px;"></div>
<div class="t" style="left:1487.5px;top:345.5px;font-size:17.5px;color:#eeeeee;font-weight:400;letter-spacing:0.210px;-webkit-text-stroke:0.46px #282828;">3rd-party requests</div>
<div class="r" style="left:1010px;top:374px;width:910px;height:1px;background:#474747;"></div>
<div class="r" style="left:1226.1000000000001px;top:375px;width:1.6px;height:120px;background:#474747;"></div>
<div class="r" style="left:1440.2px;top:375px;width:1.6px;height:120px;background:#474747;"></div>
<div class="r" style="left:1654.6000000000001px;top:375px;width:1.6px;height:120px;background:#474747;"></div>
<div class="r" style="left:1869.3px;top:375px;width:1.6px;height:120px;background:#474747;"></div>
<div class="t" style="left:1185px;top:379.2px;font-size:13.5px;color:#eeeeee;font-weight:400;letter-spacing:0.107px;-webkit-text-stroke:0.22px #282828;">50 ms</div>
<div class="t" style="left:1392.2px;top:379.2px;font-size:13.5px;color:#eeeeee;font-weight:400;letter-spacing:0.005px;-webkit-text-stroke:0.22px #282828;">100 ms</div>
<div class="t" style="left:1607px;top:379.2px;font-size:13.5px;color:#eeeeee;font-weight:400;letter-spacing:-0.045px;-webkit-text-stroke:0.22px #282828;">150 ms</div>
<div class="t" style="left:1820.4px;top:379.2px;font-size:13.5px;color:#eeeeee;font-weight:400;letter-spacing:0.138px;-webkit-text-stroke:0.22px #282828;">200 ms</div>
<div class="r" style="left:1384.4px;top:405px;width:2.1px;height:90.5px;background:#c98460;"></div>
<div class="r" style="left:1704.7px;top:405px;width:2.4px;height:90.5px;background:#45a9d6;"></div>
<div class="r" style="left:1015.8px;top:417.8px;width:12.8px;height:3.2px;background:#8e8e8e;"></div>
<div class="r" style="left:1030.9px;top:417.8px;width:5.3px;height:3.2px;background:#3fb554;"></div>
<div class="r" style="left:1038px;top:417.8px;width:13.8px;height:3.2px;background:#4c8bf0;"></div>
<div class="r" style="left:1736.8px;top:417.8px;width:29.5px;height:3.2px;background:#585858;"></div>
<div class="r" style="left:1767px;top:417.8px;width:1.8px;height:3.2px;background:#3c5040;"></div>
<div class="r" style="left:1769.9px;top:417.8px;width:7px;height:3.2px;background:#3fb554;"></div>
<div class="r" style="left:1778px;top:417.8px;width:14px;height:3.2px;background:#4c8bf0;"></div>
<div class="r" style="left:1010.7px;top:403px;width:3.7px;height:92.5px;background:#1b86c4;"></div>
<div class="r" style="left:1010.5px;top:375px;width:8.7px;height:28.6px;background:#00579c;border:1px solid #3a8cbd;border-left:none;border-radius:0 4.500px 4.500px 0;"></div>
<div class="r" style="left:1011.8px;top:384px;width:2.4px;height:10px;background:#a8c7fa;"></div>
<div class="r" style="left:1917.9px;top:403px;width:2.1px;height:92.5px;background:#1b86c4;"></div>
<div class="r" style="left:1913.2px;top:375px;width:6.8px;height:28.6px;background:#00579c;border:1px solid #3a8cbd;border-right:none;border-radius:4.500px 0 0 4.500px;"></div>
<div class="r" style="left:1916.8px;top:384px;width:2.4px;height:10.3px;background:#a8c7fa;"></div>
<div class="r" style="left:1010px;top:495px;width:910px;height:1px;background:#474747;"></div>
<div class="r" style="left:1010px;top:496px;width:910px;height:40.5px;background:#27282c;"></div>
<div class="r" style="left:1010px;top:536.5px;width:910px;height:31.5px;background:#27282c;"></div>
<div class="r" style="left:1010px;top:568px;width:910px;height:32px;background:#1f1f1f;"></div>
<div class="r" style="left:1010px;top:536px;width:910px;height:1px;background:#474747;"></div>
<div class="r" style="left:1180px;top:496px;width:1.15px;height:460px;background:#494949;"></div>
<div class="r" style="left:1258px;top:496px;width:1.15px;height:460px;background:#494949;"></div>
<div class="r" style="left:1374px;top:496px;width:1.15px;height:460px;background:#494949;"></div>
<div class="r" style="left:1472px;top:496px;width:1.15px;height:460px;background:#494949;"></div>
<div class="r" style="left:1551px;top:496px;width:1.15px;height:460px;background:#494949;"></div>
<div class="r" style="left:1723px;top:496px;width:1.15px;height:460px;background:#494949;"></div>
<div class="t" style="left:1019.3px;top:504.9px;font-size:17.5px;color:#eeeeee;font-weight:400;letter-spacing:-0.421px;-webkit-text-stroke:0.46px #27282c;">Name</div>
<div class="t" style="left:1187.2px;top:504.9px;font-size:17.5px;color:#eeeeee;font-weight:400;letter-spacing:-0.419px;-webkit-text-stroke:0.46px #27282c;">Status</div>
<div class="t" style="left:1265.5px;top:504.9px;font-size:17.5px;color:#eeeeee;font-weight:400;letter-spacing:-0.535px;-webkit-text-stroke:0.46px #27282c;">Type</div>
<div class="t" style="left:1382px;top:504.9px;font-size:17.5px;color:#eeeeee;font-weight:400;letter-spacing:0.290px;-webkit-text-stroke:0.46px #27282c;">Initiator</div>
<div class="t" style="left:1479.5px;top:504.9px;font-size:17.5px;color:#eeeeee;font-weight:400;letter-spacing:-0.613px;-webkit-text-stroke:0.46px #27282c;transform:scaleX(0.9400);transform-origin:0 50%;">Size</div>
<div class="t" style="left:1558px;top:504.9px;font-size:17.5px;color:#eeeeee;font-weight:400;letter-spacing:-0.235px;-webkit-text-stroke:0.46px #27282c;">Time</div>
<div class="t" style="left:1730.8px;top:504.9px;font-size:17.5px;color:#eeeeee;font-weight:400;letter-spacing:-0.188px;-webkit-text-stroke:0.46px #27282c;">Waterfall</div>
<svg class="r" style="left:1892px;top:512px;" width="13" height="9" viewBox="0 0 13 9"><path d="M6.500 .300L12.400 8.700H.600z" fill="#c7c7c7"/></svg>
<svg class="r" style="left:1020px;top:543px;" width="18" height="18" viewBox="0 0 18 18"><rect x="1.200" y="1.400" width="15.600" height="15.200" rx="1.800" fill="#14213f" stroke="#74a2ee" stroke-width="1.500"/><path d="M4.200 5.200h9.800M4.200 9h9.800M4.200 12.800h7.200" stroke="#b9caf0" stroke-width="1.500"/></svg>
<div class="t" style="left:1046.3px;top:541.9px;font-size:17.5px;color:#eeeeee;font-weight:400;letter-spacing:0.014px;-webkit-text-stroke:0.46px #27282c;">unicorn</div>
<div class="t" style="left:1187.5px;top:541.9px;font-size:17.5px;color:#eeeeee;font-weight:400;letter-spacing:-0.133px;-webkit-text-stroke:0.46px #27282c;">200</div>
<div class="t" style="left:1265.5px;top:541.9px;font-size:17.5px;color:#eeeeee;font-weight:400;letter-spacing:0.331px;-webkit-text-stroke:0.46px #27282c;">document</div>
<div class="t" style="left:1382px;top:541.9px;font-size:17.5px;color:#8f8f8f;font-weight:400;letter-spacing:0.006px;-webkit-text-stroke:0.46px #27282c;">Other</div>
<div class="t" style="left:1501.7px;top:541.9px;font-size:17.5px;color:#eeeeee;font-weight:400;letter-spacing:-0.613px;-webkit-text-stroke:0.46px #27282c;transform:scaleX(0.9749);transform-origin:0 50%;">161 B</div>
<div class="t" style="left:1678.3px;top:541.9px;font-size:17.5px;color:#eeeeee;font-weight:400;letter-spacing:0.019px;-webkit-text-stroke:0.46px #27282c;">5 ms</div>
<div class="r" style="left:1020.8px;top:575.9px;width:16.4px;height:16.2px;background:transparent;border:1.700px solid #c9c9c9;border-radius:2.500px;"></div>
<div class="t" style="left:1046.3px;top:573.0px;font-size:17.5px;color:#eeeeee;font-weight:400;letter-spacing:0.029px;-webkit-text-stroke:0.46px #1f1f1f;">favicon.ico</div>
<div class="t" style="left:1187.5px;top:573.0px;font-size:17.5px;color:#eeeeee;font-weight:400;letter-spacing:-0.133px;-webkit-text-stroke:0.46px #1f1f1f;">200</div>
<div class="t" style="left:1265.5px;top:573.0px;font-size:17.5px;color:#eeeeee;font-weight:400;letter-spacing:0.430px;-webkit-text-stroke:0.46px #1f1f1f;">text/html</div>
<div class="t" style="left:1382px;top:573.0px;font-size:17.5px;color:#8f8f8f;font-weight:400;letter-spacing:0.006px;-webkit-text-stroke:0.46px #1f1f1f;">Other</div>
<div class="t" style="left:1501.7px;top:573.0px;font-size:17.5px;color:#eeeeee;font-weight:400;letter-spacing:-0.613px;-webkit-text-stroke:0.46px #1f1f1f;transform:scaleX(0.9749);transform-origin:0 50%;">161 B</div>
<div class="t" style="left:1678.3px;top:573.0px;font-size:17.5px;color:#eeeeee;font-weight:400;letter-spacing:0.019px;-webkit-text-stroke:0.46px #1f1f1f;">3 ms</div>
<div class="r" style="left:1822.3px;top:537px;width:2.4px;height:419px;background:#275fa3;"></div>
<div class="r" style="left:1834px;top:537px;width:1.8px;height:419px;background:#333844;"></div>
<div class="r" style="left:1900.8px;top:537px;width:2.3px;height:419px;background:#7e2727;"></div>
<div class="r" style="left:1729.9px;top:548.2px;width:3.3px;height:7.9px;background:#ececec;"></div>
<div class="r" style="left:1733.2px;top:546.9px;width:4.5px;height:11.1px;background:#8c8c8c;"></div>
<div class="r" style="left:1738.9px;top:542.2px;width:1.6px;height:19.9px;background:#5fc48c;"></div>
<div class="r" style="left:1740.4px;top:543.6px;width:3.9px;height:17.3px;background:#1fa5dc;"></div>
<div class="r" style="left:1907.8px;top:579px;width:12.2px;height:11px;background:#f4f4f4;"></div>
<div class="r" style="left:1010px;top:956px;width:910px;height:1px;background:#474747;"></div>
<div class="t" style="left:1026.3px;top:964.8px;font-size:17.5px;color:#c7c7c7;font-weight:400;letter-spacing:-0.052px;-webkit-text-stroke:0.46px #282828;">2 requests</div>
<div class="r" style="left:1121.85px;top:965px;width:1.3px;height:24px;background:#5c5c5c;"></div>
<div class="t" style="left:1137.5px;top:964.8px;font-size:17.5px;color:#c7c7c7;font-weight:400;letter-spacing:-0.042px;-webkit-text-stroke:0.46px #282828;">322 B transferred</div>
<div class="r" style="left:1286.2px;top:965px;width:1.6px;height:24px;background:#5c5c5c;"></div>
<div class="t" style="left:1301.3px;top:964.8px;font-size:17.5px;color:#c7c7c7;font-weight:400;letter-spacing:-0.290px;-webkit-text-stroke:0.46px #282828;">0 B resources</div>
<div class="r" style="left:1420.1499999999999px;top:965px;width:1.3px;height:24px;background:#5c5c5c;"></div>
<div class="t" style="left:1435px;top:964.8px;font-size:17.5px;color:#c7c7c7;font-weight:400;letter-spacing:-0.093px;-webkit-text-stroke:0.46px #282828;">Finish: 178 ms</div>
<div class="r" style="left:1561.2px;top:965px;width:1.6px;height:24px;background:#5c5c5c;"></div>
<div class="t" style="left:1577.5px;top:964.8px;font-size:17.5px;color:#ec8558;font-weight:400;letter-spacing:0.148px;-webkit-text-stroke:0.46px #282828;">DOMContentLoaded: 86 ms</div>
<div class="r" style="left:1813.1499999999999px;top:965px;width:1.3px;height:24px;background:#5c5c5c;"></div>
<div class="t" style="left:1829.5px;top:964.8px;font-size:17.5px;color:#4db2e0;font-weight:400;letter-spacing:-0.395px;-webkit-text-stroke:0.46px #282828;">Load: 161</div>
<div class="r" style="left:975.3px;top:960.5px;width:24.8px;height:24.8px;background:#ffffff;border-radius:12.4px;box-shadow:0 1px 2.5px rgba(0,0,0,.13);"></div>
<svg class="r" style="left:979px;top:963px;" width="16" height="20" viewBox="0 0 16 20"><defs><linearGradient id="cu1" x1="0" x2="1"><stop offset="0" stop-color="#e81fb3"/><stop offset=".45" stop-color="#f2409a"/><stop offset="1" stop-color="#f9a030"/></linearGradient><linearGradient id="cu2" x1="0" x2="1"><stop offset="0" stop-color="#7b3ff2"/><stop offset="1" stop-color="#3f9bf7"/></linearGradient></defs><path d="M1.900 8.600L7.700 3.300l5.600 5.300" fill="none" stroke="url(#cu1)" stroke-width="3"/><path d="M2 14.200Q7.700 20.600 13.500 14.200" fill="none" stroke="url(#cu2)" stroke-width="3"/></svg>
</body></html>
